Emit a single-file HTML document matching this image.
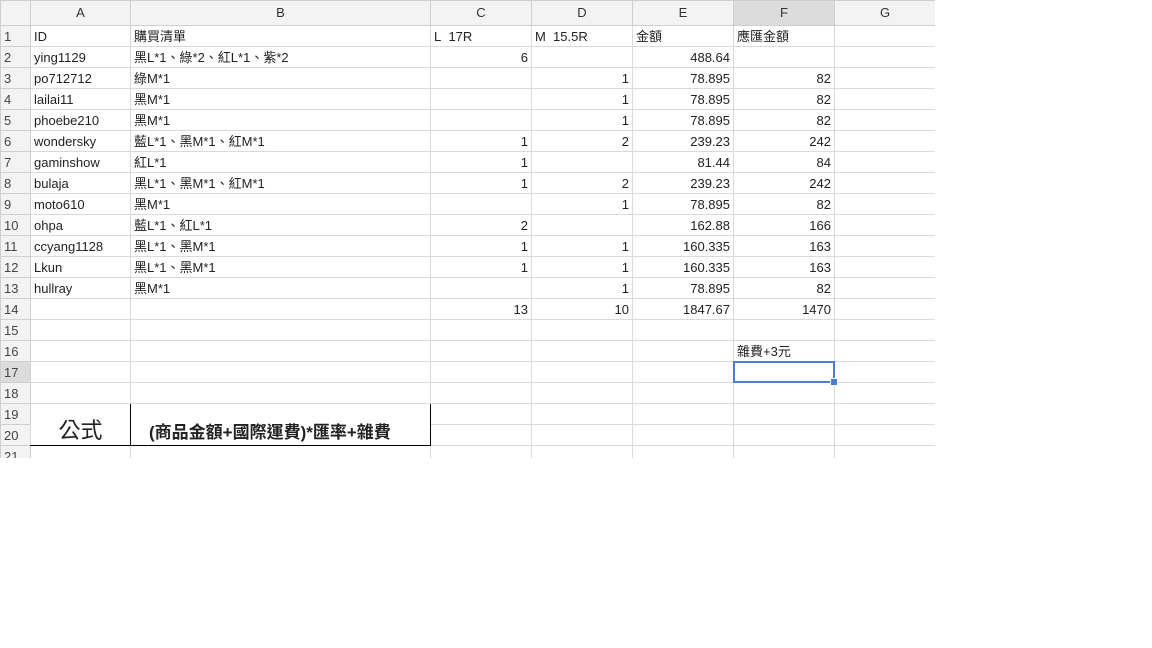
<!DOCTYPE html>
<html><head><meta charset="utf-8"><style>
body{margin:0;width:1152px;height:648px;background:#fff;overflow:hidden;position:relative;font-family:"Liberation Sans","Noto Sans CJK TC",sans-serif;font-size:13px;color:#222}
.wrap{position:absolute;left:0;top:0;width:935px;height:458px;overflow:hidden}
table{border-collapse:collapse;table-layout:fixed;width:935px}
td{border:1px solid #dadada;height:20px;padding:0 3px 1px 3px;box-sizing:border-box;white-space:nowrap;overflow:hidden;vertical-align:bottom;line-height:16px}
tr.h td{height:25px;background:#f3f3f3;text-align:center;vertical-align:middle;color:#333;border-color:#cfcfcf;padding:0}
tr{height:21px}
td.n{background:#f3f3f3;color:#444;text-align:left;padding-left:3px;border-color:#cfcfcf}
td.r{text-align:right}
.sel{position:absolute;left:733px;top:361px;width:98px;height:18px;border:2px solid #4a7fd1}
.hand{position:absolute;left:830px;top:378px;width:6px;height:6px;background:#4a7fd1;border:1px solid #fff}
</style></head><body>
<div class="wrap">
<table>
<colgroup><col style="width:30px"><col style="width:100px"><col style="width:300px"><col style="width:101px"><col style="width:101px"><col style="width:101px"><col style="width:101px"><col style="width:101px"></colgroup>
<tr class="h"><td></td><td>A</td><td>B</td><td>C</td><td>D</td><td>E</td><td style="background:#dcdcdc">F</td><td>G</td></tr>
<tr><td class="n">1</td><td>ID</td><td>購買清單</td><td>L&nbsp;&nbsp;17R</td><td>M&nbsp;&nbsp;15.5R</td><td>金額</td><td>應匯金額</td><td></td></tr>
<tr><td class="n">2</td><td>ying1129</td><td>黑L*1、綠*2、紅L*1、紫*2</td><td class="r">6</td><td></td><td class="r">488.64</td><td></td><td></td></tr>
<tr><td class="n">3</td><td>po712712</td><td>綠M*1</td><td></td><td class="r">1</td><td class="r">78.895</td><td class="r">82</td><td></td></tr>
<tr><td class="n">4</td><td>lailai11</td><td>黑M*1</td><td></td><td class="r">1</td><td class="r">78.895</td><td class="r">82</td><td></td></tr>
<tr><td class="n">5</td><td>phoebe210</td><td>黑M*1</td><td></td><td class="r">1</td><td class="r">78.895</td><td class="r">82</td><td></td></tr>
<tr><td class="n">6</td><td>wondersky</td><td>藍L*1、黑M*1、紅M*1</td><td class="r">1</td><td class="r">2</td><td class="r">239.23</td><td class="r">242</td><td></td></tr>
<tr><td class="n">7</td><td>gaminshow</td><td>紅L*1</td><td class="r">1</td><td></td><td class="r">81.44</td><td class="r">84</td><td></td></tr>
<tr><td class="n">8</td><td>bulaja</td><td>黑L*1、黑M*1、紅M*1</td><td class="r">1</td><td class="r">2</td><td class="r">239.23</td><td class="r">242</td><td></td></tr>
<tr><td class="n">9</td><td>moto610</td><td>黑M*1</td><td></td><td class="r">1</td><td class="r">78.895</td><td class="r">82</td><td></td></tr>
<tr><td class="n">10</td><td>ohpa</td><td>藍L*1、紅L*1</td><td class="r">2</td><td></td><td class="r">162.88</td><td class="r">166</td><td></td></tr>
<tr><td class="n">11</td><td>ccyang1128</td><td>黑L*1、黑M*1</td><td class="r">1</td><td class="r">1</td><td class="r">160.335</td><td class="r">163</td><td></td></tr>
<tr><td class="n">12</td><td>Lkun</td><td>黑L*1、黑M*1</td><td class="r">1</td><td class="r">1</td><td class="r">160.335</td><td class="r">163</td><td></td></tr>
<tr><td class="n">13</td><td>hullray</td><td>黑M*1</td><td></td><td class="r">1</td><td class="r">78.895</td><td class="r">82</td><td></td></tr>
<tr><td class="n">14</td><td></td><td></td><td class="r">13</td><td class="r">10</td><td class="r">1847.67</td><td class="r">1470</td><td></td></tr>
<tr><td class="n">15</td><td></td><td></td><td></td><td></td><td></td><td></td><td></td></tr>
<tr><td class="n">16</td><td></td><td></td><td></td><td></td><td></td><td>雜費+3元</td><td></td></tr>
<tr><td class="n" style="background:#dcdcdc">17</td><td></td><td></td><td></td><td></td><td></td><td></td><td></td></tr>
<tr><td class="n">18</td><td></td><td></td><td></td><td></td><td></td><td></td><td></td></tr>
<tr><td class="n">19</td><td rowspan="2" style="border:1px solid #000;border-left-color:#dadada;text-align:center;font-size:22px;line-height:26px;vertical-align:bottom">公式</td><td rowspan="2" style="border:1px solid #000;font-size:17px;font-weight:bold;padding-left:18px;line-height:22px;vertical-align:bottom">(商品金額+國際運費)*匯率+雜費</td><td></td><td></td><td></td><td></td><td></td></tr>
<tr><td class="n">20</td><td></td><td></td><td></td><td></td><td></td></tr>
<tr><td class="n">21</td><td></td><td></td><td></td><td></td><td></td><td></td><td></td></tr>
</table>
</div>
<div class="sel"></div><div class="hand"></div>
</body></html>
